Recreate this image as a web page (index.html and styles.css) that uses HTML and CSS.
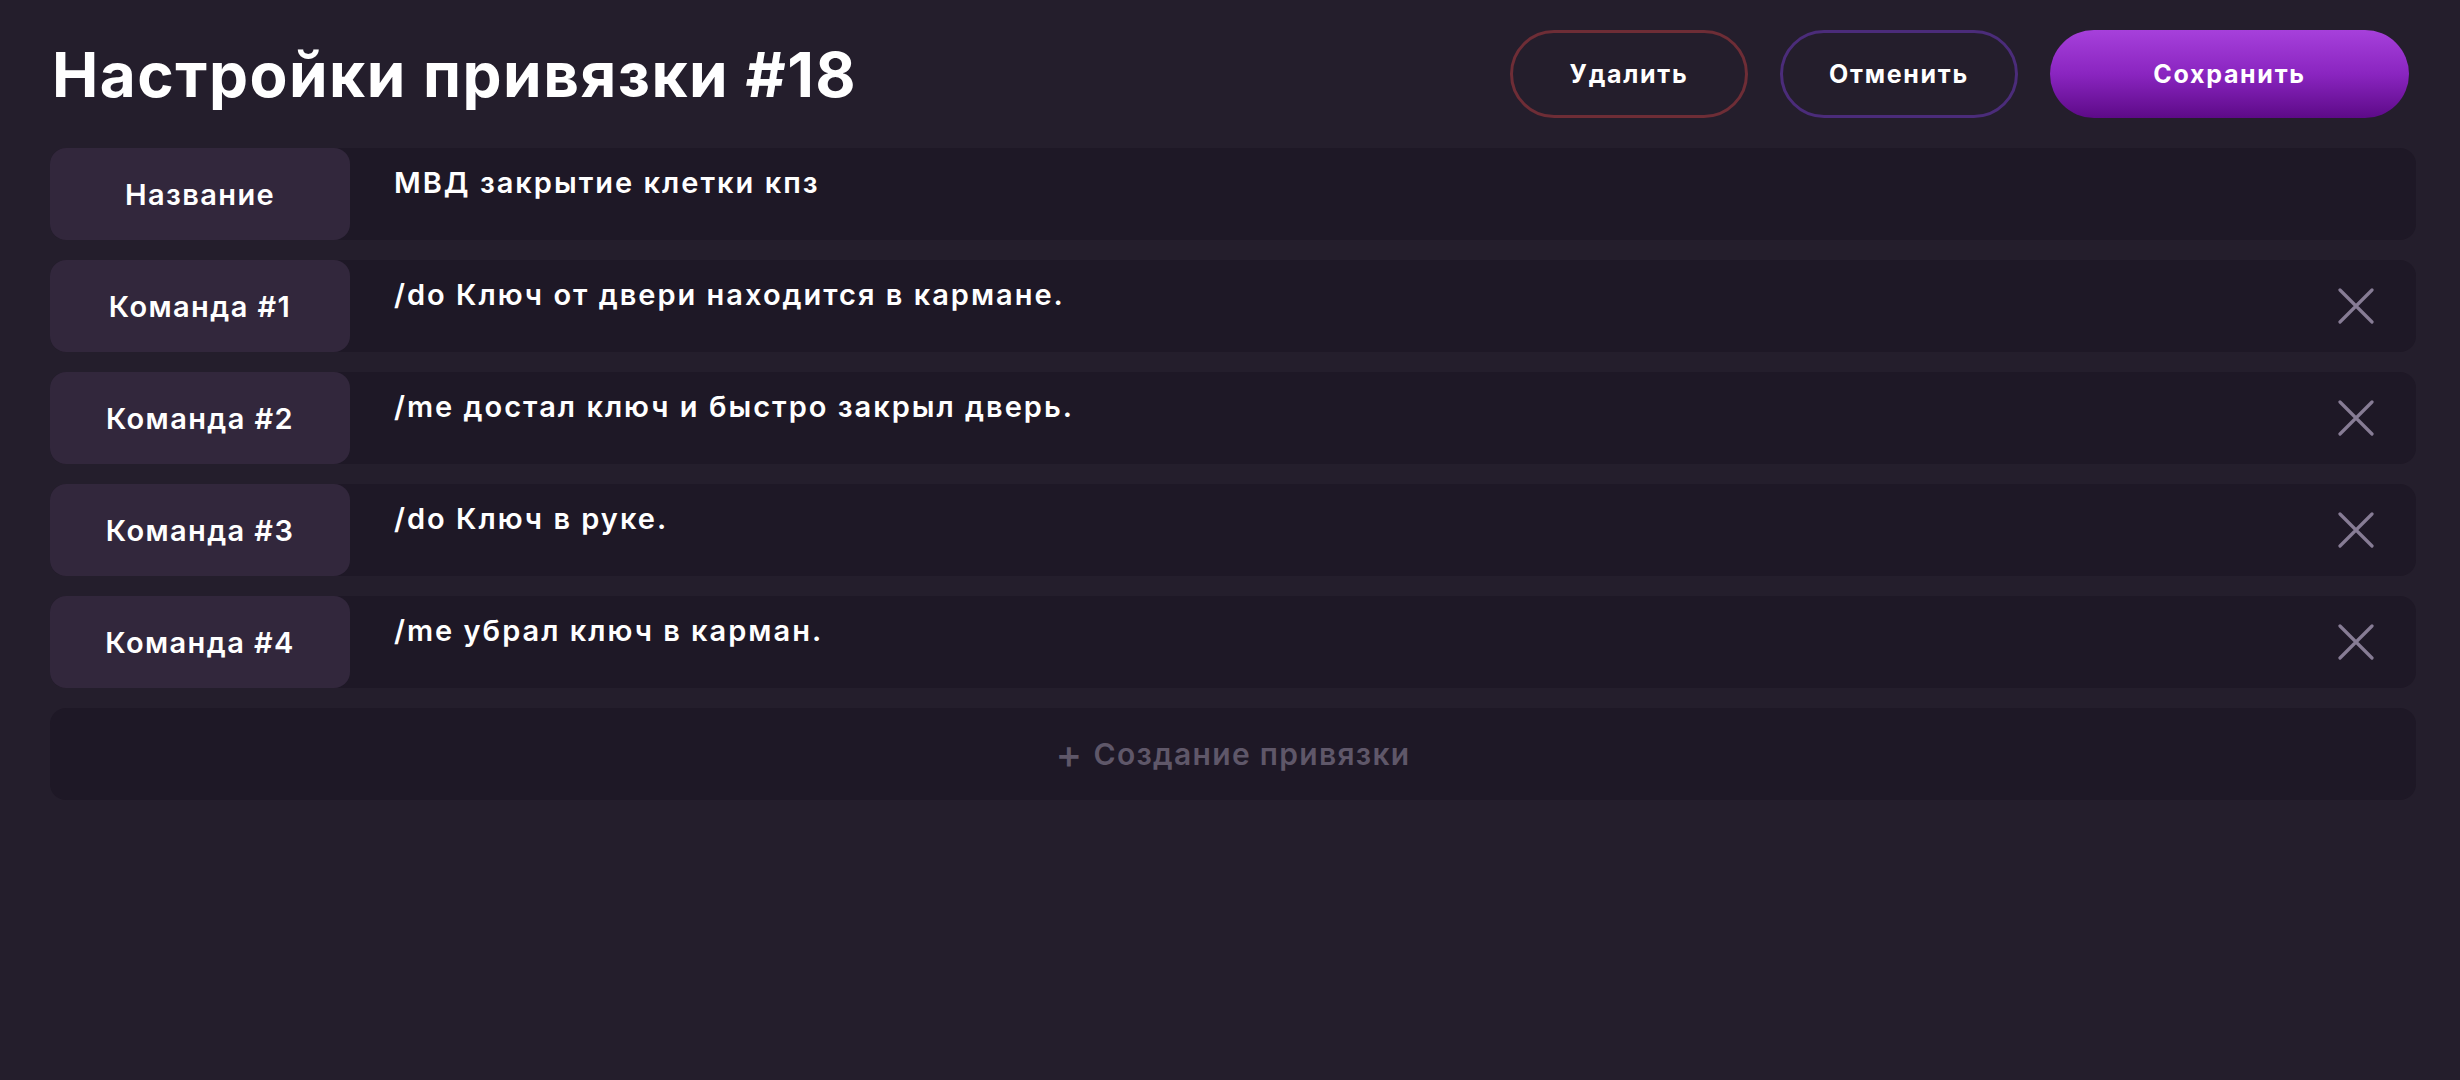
FILE: index.html
```html
<!DOCTYPE html>
<html lang="ru">
<head>
<meta charset="utf-8">
<link rel="stylesheet" href="styles.css">
</head>
<body>
<div class="page">
  <header class="header">
    <h1 class="title">Настройки привязки #18</h1>
    <div class="actions">
      <button class="btn btn-delete">Удалить</button>
      <button class="btn btn-cancel">Отменить</button>
      <button class="btn btn-save">Сохранить</button>
    </div>
  </header>
  <div class="rows">
    <div class="row">
      <div class="label">Название</div>
      <div class="value">МВД закрытие клетки кпз</div>
    </div>
    <div class="row">
      <div class="label">Команда #1</div>
      <div class="value">/do Ключ от двери находится в кармане.</div>
      <span class="close"><svg viewBox="0 0 36 36" width="36" height="36"><path d="M2 2L34 34M34 2L2 34" stroke="#877c95" stroke-width="3.2" stroke-linecap="round" fill="none"/></svg></span>
    </div>
    <div class="row">
      <div class="label">Команда #2</div>
      <div class="value">/me достал ключ и быстро закрыл дверь.</div>
      <span class="close"><svg viewBox="0 0 36 36" width="36" height="36"><path d="M2 2L34 34M34 2L2 34" stroke="#877c95" stroke-width="3.2" stroke-linecap="round" fill="none"/></svg></span>
    </div>
    <div class="row">
      <div class="label">Команда #3</div>
      <div class="value">/do Ключ в руке.</div>
      <span class="close"><svg viewBox="0 0 36 36" width="36" height="36"><path d="M2 2L34 34M34 2L2 34" stroke="#877c95" stroke-width="3.2" stroke-linecap="round" fill="none"/></svg></span>
    </div>
    <div class="row">
      <div class="label">Команда #4</div>
      <div class="value">/me убрал ключ в карман.</div>
      <span class="close"><svg viewBox="0 0 36 36" width="36" height="36"><path d="M2 2L34 34M34 2L2 34" stroke="#877c95" stroke-width="3.2" stroke-linecap="round" fill="none"/></svg></span>
    </div>
    <div class="row row-create">
      <span class="plus">+</span> Создание привязки
    </div>
  </div>
</div>
</body>
</html>
```
FILE: styles.css
```css
html, body {
  margin: 0;
  padding: 0;
  background: #241e2c;
  height: 100%;
}
body {
  font-family: Inter, "Noto Sans", sans-serif;
  color: #ffffff;
}
.page {
  padding: 30px 44px 0 50px;
}
.header {
  display: flex;
  align-items: center;
  justify-content: space-between;
  height: 88px;
}
.title {
  margin: 0;
  font-size: 62px;
  font-weight: 700;
  letter-spacing: 1.5px;
  padding-left: 2px;
}
.actions {
  display: flex;
  gap: 32px;
  padding-right: 7px;
}
.btn {
  height: 88px;
  border-radius: 44px;
  font-family: Inter, "Noto Sans", sans-serif;
  font-size: 25px;
  font-weight: 700;
  letter-spacing: 1.7px;
  color: #ffffff;
  background: transparent;
  border: 3px solid transparent;
  padding: 0;
}
.btn-delete {
  width: 238px;
  border-color: #6e2d36;
}
.btn-cancel {
  width: 238px;
  border-color: #4b2c7a;
}
.btn-save {
  width: 359px;
  border: none;
  background: linear-gradient(180deg, #a640db 0%, #8a25c0 50%, #5d0a88 100%);
}
.rows {
  display: flex;
  flex-direction: column;
  gap: 20px;
  margin-top: 30px;
}
.row {
  display: flex;
  align-items: stretch;
  height: 92px;
  background: #1e1826;
  border-radius: 16px;
}
.label {
  width: 300px;
  flex: none;
  display: flex;
  align-items: center;
  justify-content: center;
  background: #32273c;
  border-radius: 16px;
  font-size: 29px;
  font-weight: 600;
  letter-spacing: 1.4px;
}
.value {
  flex: 1;
  padding: 17px 0 0 44px;
  font-size: 29px;
  font-weight: 600;
  letter-spacing: 2px;
}
.close {
  display: flex;
  align-items: center;
  padding-right: 42px;
}
.row-create {
  justify-content: center;
  align-items: center;
  color: #5f5769;
  font-size: 30px;
  font-weight: 600;
  letter-spacing: 1.3px;
}
.plus {
  font-weight: 500;
  font-size: 40px;
  margin-right: 10px;
  line-height: 1;
}
```
